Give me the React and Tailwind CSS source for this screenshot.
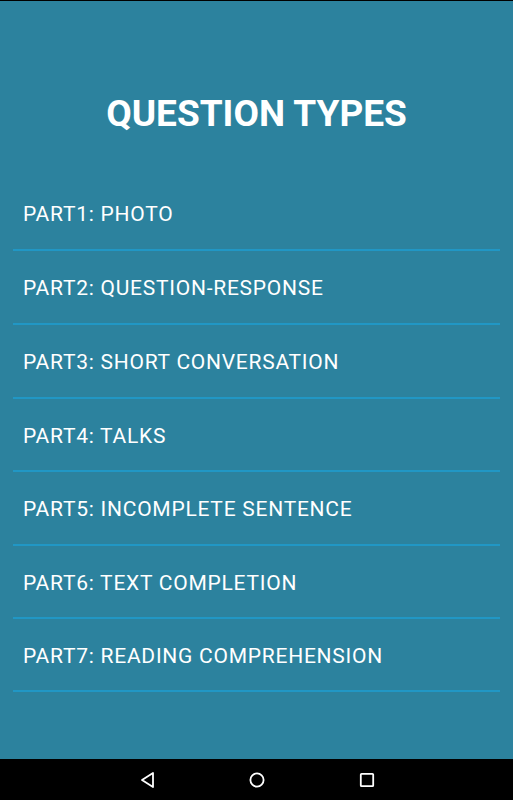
const PARTS = [
  { label: 'PART1: PHOTO', pb: 'pb-[23px]' },
  { label: 'PART2: QUESTION-RESPONSE', pb: 'pb-[23px]' },
  { label: 'PART3: SHORT CONVERSATION', pb: 'pb-[23px]' },
  { label: 'PART4: TALKS', pb: 'pb-[22px]' },
  { label: 'PART5: INCOMPLETE SENTENCE', pb: 'pb-[23px]' },
  { label: 'PART6: TEXT COMPLETION', pb: 'pb-[22px]' },
  { label: 'PART7: READING COMPREHENSION', pb: 'pb-[22px]' },
];

function NavBar() {
  return (
    <div className="h-[41px] bg-black flex items-center justify-center gap-[86px]">
      <svg width="24" height="24" viewBox="0 0 24 24" className="text-white">
        <path d="M18 5 L18 19 L7 12 Z" fill="none" stroke="currentColor" strokeWidth="1.8" strokeLinejoin="round" />
      </svg>
      <svg width="24" height="24" viewBox="0 0 24 24" className="text-white">
        <circle cx="12" cy="12" r="6.6" fill="none" stroke="currentColor" strokeWidth="1.8" />
      </svg>
      <svg width="24" height="24" viewBox="0 0 24 24" className="text-white">
        <rect x="5.8" y="5.8" width="12.4" height="12.4" rx="0.8" fill="none" stroke="currentColor" strokeWidth="1.8" />
      </svg>
    </div>
  );
}

export default function App() {
  return (
    <div
      className="w-[513px] h-[800px] flex flex-col bg-[#2c829e] border-t border-black"
      style={{ fontFamily: 'Roboto, "Liberation Sans", sans-serif' }}
    >
      <div className="flex-1">
        <h1 className="pt-[91px] pb-[41px] text-center text-white font-bold text-[37px] leading-[44px]">
          QUESTION TYPES
        </h1>
        <ul className="mx-[13px]">
          {PARTS.map((p) => (
            <li key={p.label}>
              <div className={`pl-[10px] pt-[25px] ${p.pb} text-white text-[21px] leading-[24px] tracking-[0.75px]`}>
                {p.label}
              </div>
              <div className="h-[2px] bg-[#2197c5]" />
            </li>
          ))}
        </ul>
      </div>
      <NavBar />
    </div>
  );
}
